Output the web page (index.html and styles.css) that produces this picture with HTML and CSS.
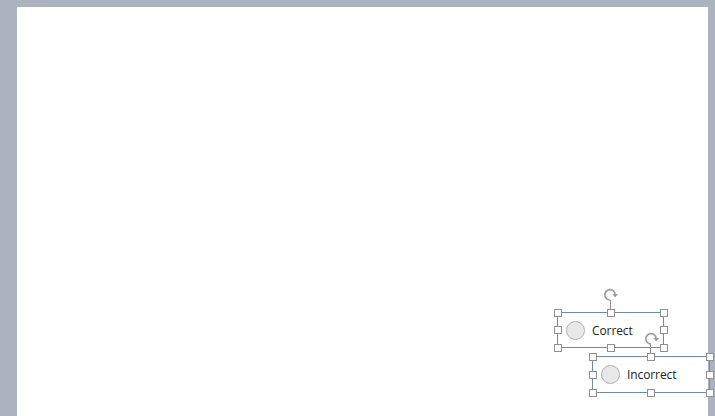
FILE: index.html
```html
<!DOCTYPE html>
<html lang="en">
<head>
    <meta charset="UTF-8">
    <meta name="viewport" content="width=device-width, initial-scale=1.0">
    <title>Option buttons</title>
    <link rel="stylesheet" href="styles.css">
</head>
<body>
    <div class="slide">
        <div class="ctl ctl-correct">
            <div class="rotate">
                <svg width="18" height="16" viewBox="0 0 18 16">
                    <path d="M8 13 A5.2 5.2 0 1 1 13.2 7.8" fill="none" stroke="#9a9a9a" stroke-width="1.6"/>
                    <path d="M10.4 7 L16 7 L13.2 10.6 Z" fill="#9a9a9a"/>
                </svg>
                <span class="stem"></span>
            </div>
            <span class="radio"></span>
            <span class="label">Correct</span>
            <span class="h tl"></span><span class="h tm"></span><span class="h tr"></span>
            <span class="h ml"></span><span class="h mr"></span>
            <span class="h bl"></span><span class="h bm"></span><span class="h br"></span>
        </div>

        <div class="ctl ctl-incorrect">
            <div class="rotate">
                <svg width="18" height="16" viewBox="0 0 18 16">
                    <path d="M8 13 A5.2 5.2 0 1 1 13.2 7.8" fill="none" stroke="#9a9a9a" stroke-width="1.6"/>
                    <path d="M10.4 7 L16 7 L13.2 10.6 Z" fill="#9a9a9a"/>
                </svg>
                <span class="stem"></span>
            </div>
            <span class="radio"></span>
            <span class="label">Incorrect</span>
            <span class="h tl"></span><span class="h tm"></span><span class="h tr"></span>
            <span class="h ml"></span><span class="h mr"></span>
            <span class="h bl"></span><span class="h bm"></span><span class="h br"></span>
        </div>
    </div>
</body>
</html>
```

FILE: styles.css
```css
html, body {
    height: 100%;
}

body {
    margin: 0;
    background-color: #abb4be; /* workspace grey */
    overflow: hidden;
}

.slide {
    position: relative;
    margin: 7px 7px 0 17px;
    height: calc(100% - 7px);
    background-color: #ffffff;
}

/* option button controls */
.ctl {
    position: absolute;
    display: flex;
    align-items: center;
    gap: 7px;
    padding-left: 8px;
    box-sizing: border-box;
    border: 1px solid #7089ae;
    font-family: "Open Sans", "Noto Sans", sans-serif;
    font-size: 12px;
    color: #222222;
}

.ctl-correct {
    left: 540px;
    top: 305px;
    width: 107px;
    height: 36px;
}

.ctl-incorrect {
    left: 575px;
    top: 349px;
    width: 118px;
    height: 37px;
    z-index: 1;
}

.radio {
    width: 19px;
    height: 19px;
    border-radius: 50%;
    box-sizing: border-box;
    border: 1px solid #b0b0b0;
    background-color: #e8e8e8;
}

.label {
    letter-spacing: -0.1px;
}

/* sizing handles */
.h {
    position: absolute;
    width: 8px;
    height: 8px;
    box-sizing: border-box;
    border: 1.5px solid #909090;
    background-color: #ffffff;
}

.tl, .tm, .tr { top: -4.5px; }
.bl, .bm, .br { bottom: -4.5px; }
.ml, .mr { top: calc(50% - 4px); }
.tl, .ml, .bl { left: -4.5px; }
.tr, .mr, .br { right: -4.5px; }
.tm, .bm { left: calc(50% - 4px); }

.rotate {
    position: absolute;
    left: calc(50% - 8.5px);
    top: -26px;
    width: 18px;
    display: flex;
    flex-direction: column;
    align-items: flex-start;
}

.rotate svg {
    display: block;
}

.stem {
    margin-left: 7.5px;
    width: 1px;
    height: 10px;
    margin-top: -3px;
    background-color: #909090;
}
```
